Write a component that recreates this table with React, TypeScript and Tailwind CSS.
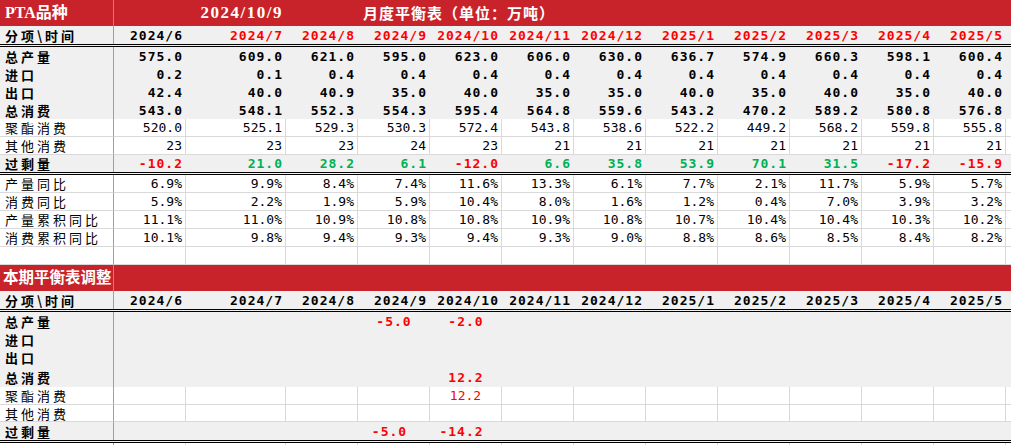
import clsx from 'clsx'

const MONTHS = ['2024/6', '2024/7', '2024/8', '2024/9', '2024/10', '2024/11', '2024/12', '2025/1', '2025/2', '2025/3', '2025/4', '2025/5']
const WIDTHS = ['w-[72px]', 'w-[100px]', 'w-[72px]', 'w-[72px]', 'w-[72px]', 'w-[72px]', 'w-[72px]', 'w-[72px]', 'w-[72px]', 'w-[72px]', 'w-[72px]', 'w-[72px]']

const labelFont = "font-['Noto_Sans_CJK_SC',sans-serif] text-[13px] tracking-[3px] leading-none"
const numBold = "font-['DejaVu_Sans_Mono','Liberation_Mono',monospace] text-[13px] font-bold tracking-[1px] leading-none"
const numNormal = "font-['DejaVu_Sans_Mono','Liberation_Mono',monospace] text-[13px] tracking-[0px] leading-none"

type RowProps = {
  label: string
  values?: string[]
  colors?: string[]
  white?: boolean
  bold?: boolean
  h: string
  dbl?: boolean
  center?: boolean
  shift?: boolean
}

function Row({ label, values = [], colors = [], white, bold, h, dbl, center, shift }: RowProps) {
  return (
    <div
      className={clsx(
        'flex w-full',
        h,
        white ? 'bg-white' : 'bg-[#f0f0f0]',
        dbl && 'border-b-[3px] border-double border-black'
      )}
    >
      <div
        className={clsx(
          'w-[114px] shrink-0 flex items-center pl-[5px] border-r border-r-[#a0a0a0] text-black',
          labelFont,
          bold && 'font-bold',
          white && 'border-b border-b-[#d9d9d9]'
        )}
      >
        {label}
      </div>
      {MONTHS.map((m, i) => (
        <div
          key={m}
          className={clsx(
            'shrink-0 flex items-center',
            WIDTHS[i],
            center ? 'justify-center' : bold ? 'justify-end pr-[3px]' : 'justify-end pr-[3px]',
            center && shift && 'pr-[9px]',
            bold ? numBold : numNormal,
            colors[i] ?? 'text-black',
            white && 'border-r border-b border-[#d9d9d9]'
          )}
        >
          {values[i] ?? ''}
        </div>
      ))}
      <div className={clsx('flex-1', white && 'border-b border-[#d9d9d9]')} />
    </div>
  )
}

function HeaderRow({ redDates }: { redDates: boolean }) {
  return (
    <div className="flex w-full h-[21px] bg-[#f0f0f0] border-b-[3px] border-double border-black">
      <div className={clsx('w-[114px] shrink-0 flex items-center pl-[5px] border-r border-r-[#a0a0a0] font-bold text-black', labelFont)}>
        分项\时间
      </div>
      {MONTHS.map((m, i) => (
        <div
          key={m}
          className={clsx(
            'shrink-0 flex items-center justify-end pr-[3px]',
            WIDTHS[i],
            numBold,
            redDates && i > 0 ? 'text-[#ff0000]' : 'text-black'
          )}
        >
          {m}
        </div>
      ))}
      <div className="flex-1" />
    </div>
  )
}

const surplusColor = (v: string) => (v.startsWith('-') ? 'text-[#ff0000]' : 'text-[#00b050]')

const surplus = ['-10.2', '21.0', '28.2', '6.1', '-12.0', '6.6', '35.8', '53.9', '70.1', '31.5', '-17.2', '-15.9']

const red = Array(12).fill('text-[#ff0000]')

export default function App() {
  return (
    <div className="w-[1011px] h-[445px] overflow-hidden bg-white">
      {/* top title bar */}
      <div className="flex h-[26px] bg-[#c8232a] text-white font-bold">
        <div className="w-[114px] shrink-0 flex items-center pl-[5px] border-r border-r-[#b8868a] font-['Liberation_Serif','Noto_Sans_CJK_SC',serif] text-[16px]">
          PTA品种
        </div>
        <div className="w-[72px] shrink-0" />
        <div className="w-[100px] shrink-0 flex items-center justify-end pr-[3px] font-['Liberation_Serif',serif] text-[17px] tracking-[1.5px]">
          2024/10/9
        </div>
        <div className="w-[72px] shrink-0" />
        <div className="flex-1 flex items-center pl-[5px] font-['Noto_Sans_CJK_SC',sans-serif] text-[15px] tracking-[1px]">
          月度平衡表（单位：万吨）
        </div>
      </div>

      <HeaderRow redDates />
      <Row label="总产量" bold h="h-[18px]" values={['575.0', '609.0', '621.0', '595.0', '623.0', '606.0', '630.0', '636.7', '574.9', '660.3', '598.1', '600.4']} />
      <Row label="进口" bold h="h-[18px]" values={['0.2', '0.1', '0.4', '0.4', '0.4', '0.4', '0.4', '0.4', '0.4', '0.4', '0.4', '0.4']} />
      <Row label="出口" bold h="h-[18px]" values={['42.4', '40.0', '40.9', '35.0', '40.0', '35.0', '35.0', '40.0', '35.0', '40.0', '35.0', '40.0']} />
      <Row label="总消费" bold h="h-[18px]" values={['543.0', '548.1', '552.3', '554.3', '595.4', '564.8', '559.6', '543.2', '470.2', '589.2', '580.8', '576.8']} />
      <Row label="聚酯消费" white h="h-[18px]" values={['520.0', '525.1', '529.3', '530.3', '572.4', '543.8', '538.6', '522.2', '449.2', '568.2', '559.8', '555.8']} />
      <Row label="其他消费" white h="h-[18px]" values={['23', '23', '23', '24', '23', '21', '21', '21', '21', '21', '21', '21']} />
      <Row label="过剩量" bold dbl h="h-[20px]" values={surplus} colors={surplus.map(surplusColor)} />
      <Row label="产量同比" white h="h-[18px]" values={['6.9%', '9.9%', '8.4%', '7.4%', '11.6%', '13.3%', '6.1%', '7.7%', '2.1%', '11.7%', '5.9%', '5.7%']} />
      <Row label="消费同比" white h="h-[18px]" values={['5.9%', '2.2%', '1.9%', '5.9%', '10.4%', '8.0%', '1.6%', '1.2%', '0.4%', '7.0%', '3.9%', '3.2%']} />
      <Row label="产量累积同比" white h="h-[18px]" values={['11.1%', '11.0%', '10.9%', '10.8%', '10.8%', '10.9%', '10.8%', '10.7%', '10.4%', '10.4%', '10.3%', '10.2%']} />
      <Row label="消费累积同比" white h="h-[18px]" values={['10.1%', '9.8%', '9.4%', '9.3%', '9.4%', '9.3%', '9.0%', '8.8%', '8.6%', '8.5%', '8.4%', '8.2%']} />
      <Row label="" white h="h-[18px]" />

      {/* adjustment section */}
      <div className="flex h-[26px] bg-[#c8232a] text-white font-bold">
        <div className="w-[114px] shrink-0 flex items-center pl-[3px] overflow-hidden whitespace-nowrap border-r border-r-[#b8868a] font-['Liberation_Serif','Noto_Sans_CJK_SC',serif] text-[15.5px]">
          本期平衡表调整
        </div>
        <div className="flex-1" />
      </div>

      <HeaderRow redDates={false} />
      <Row label="总产量" bold center h="h-[18px]" values={['', '', '', '-5.0', '-2.0']} colors={red} />
      <Row label="进口" bold h="h-[18px]" />
      <Row label="出口" bold h="h-[19px]" />
      <Row label="总消费" bold center h="h-[20px]" values={['', '', '', '', '12.2']} colors={red} />
      <Row label="聚酯消费" white center h="h-[18px]" values={['', '', '', '', '12.2']} colors={red} />
      <Row label="其他消费" white h="h-[17px]" />
      <Row label="过剩量" bold dbl center shift h="h-[21px]" values={['', '', '', '-5.0', '-14.2']} colors={red} />
      <Row label="" white h="h-[18px]" />
    </div>
  )
}
